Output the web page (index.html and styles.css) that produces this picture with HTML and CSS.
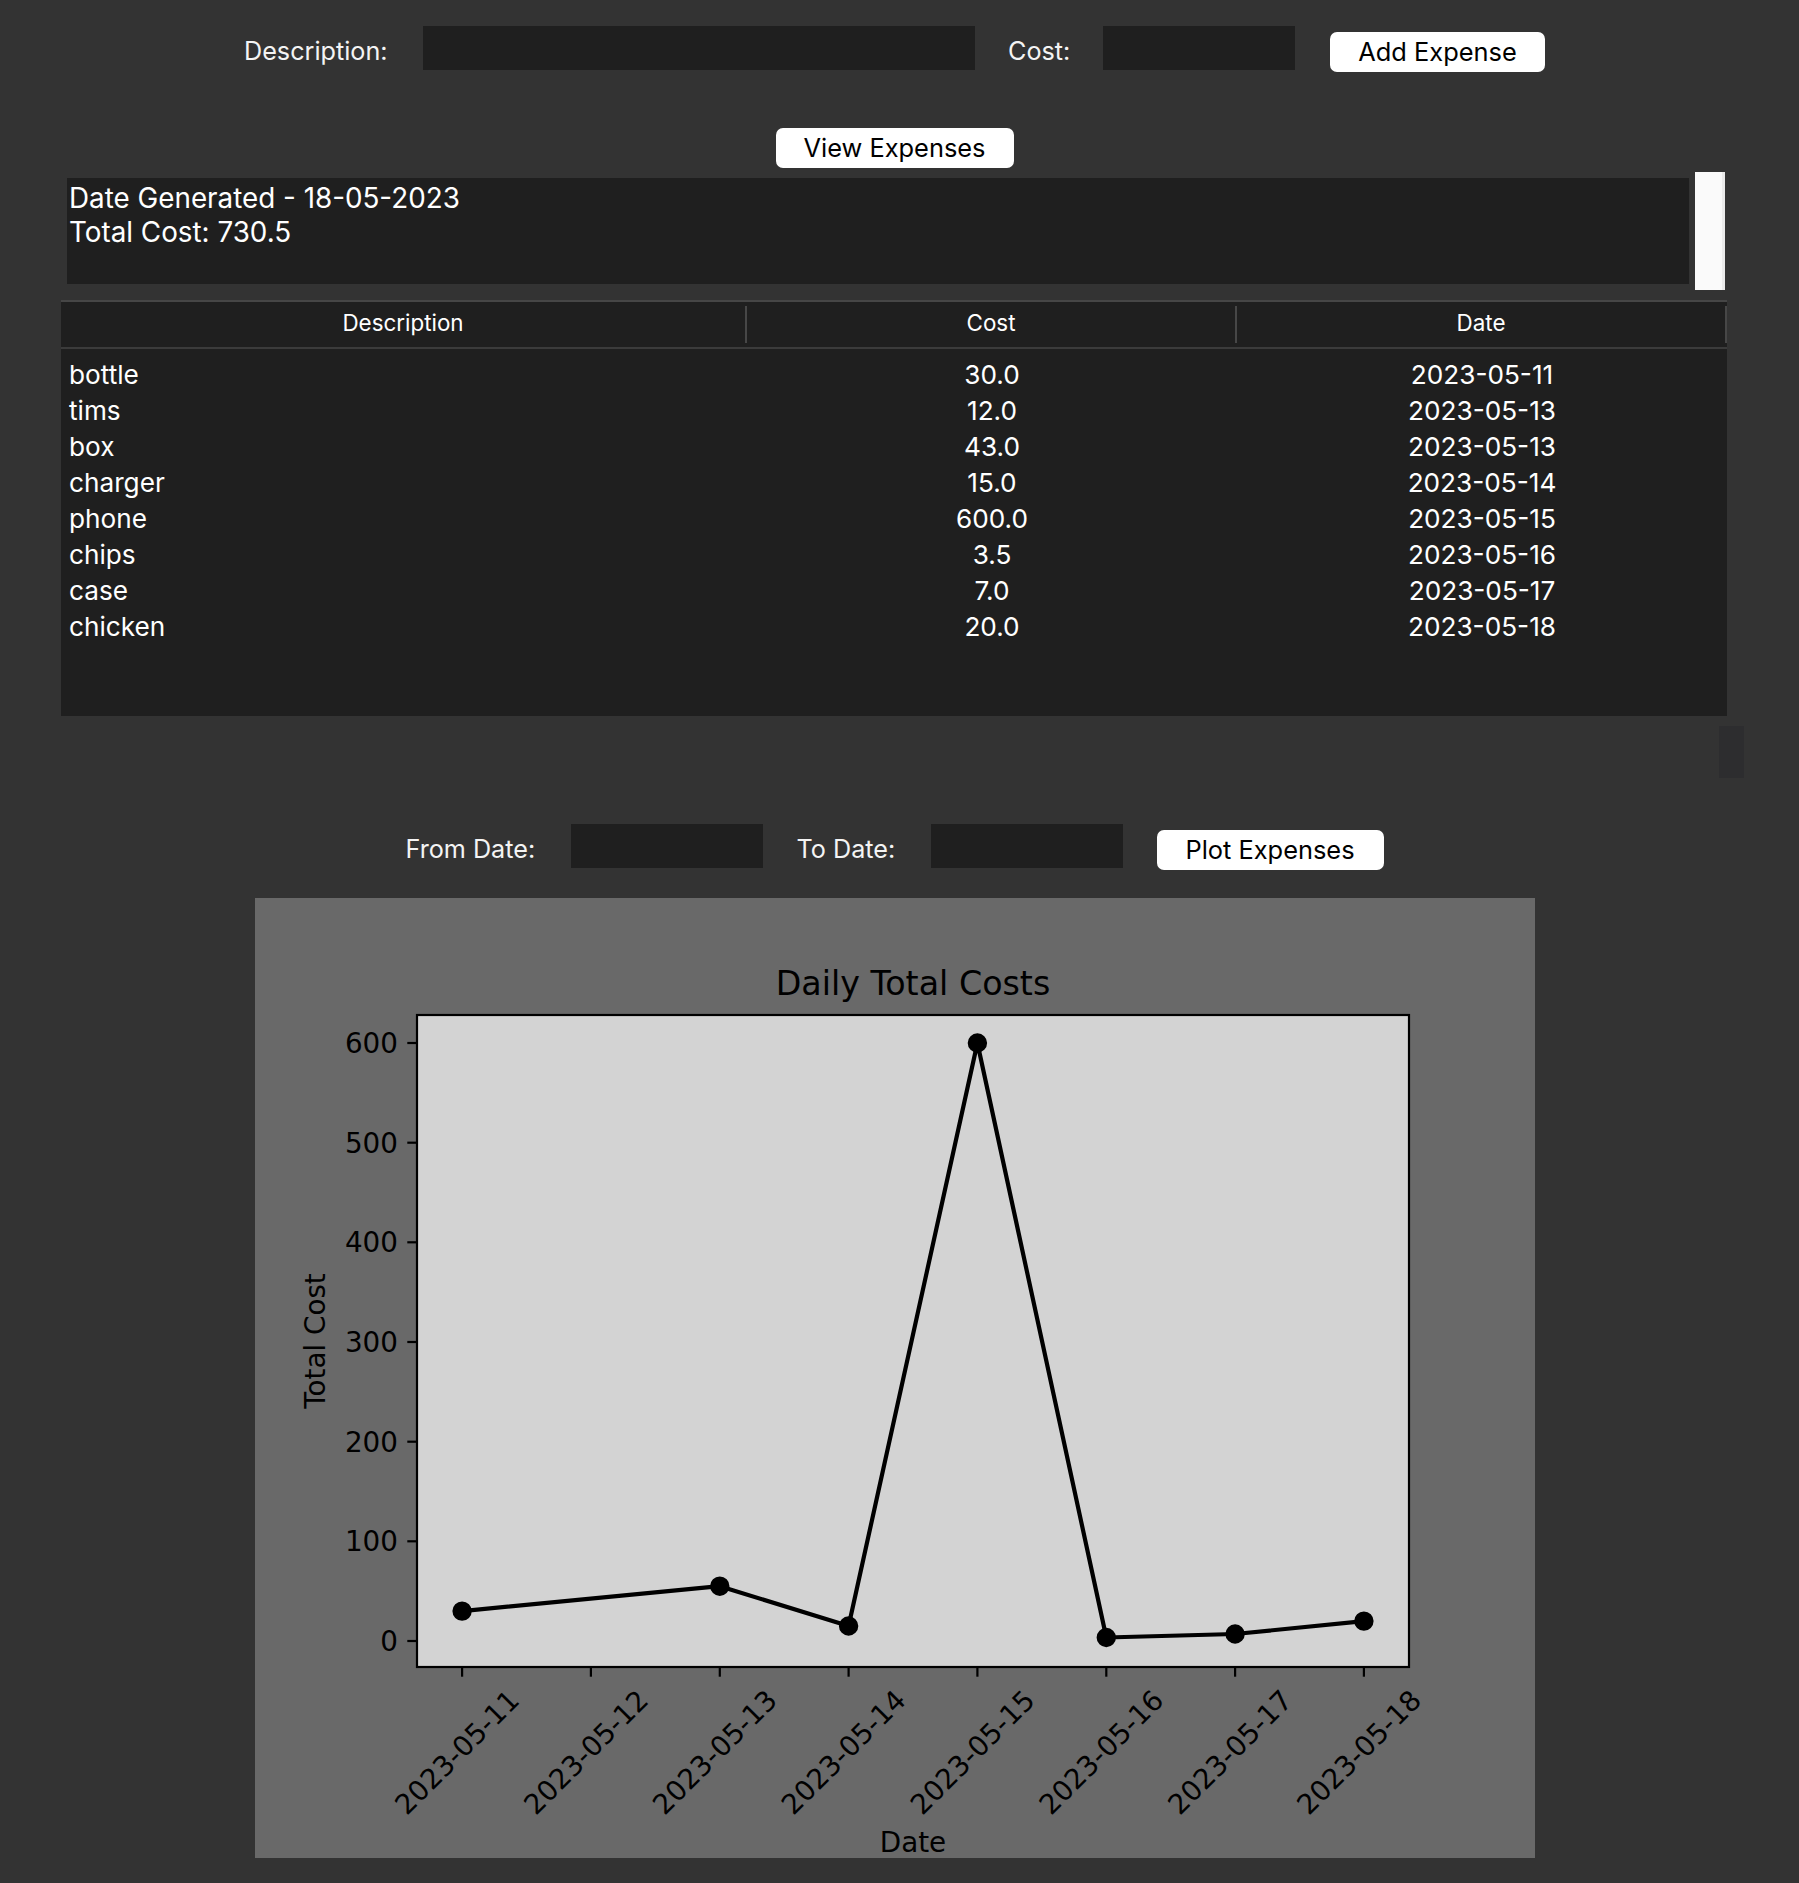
FILE: index.html
```html
<!DOCTYPE html>
<html lang="en">
<head>
<meta charset="utf-8">
<title>Expense Tracker</title>
<link rel="stylesheet" href="styles.css">
</head>
<body>
<div class="app">
  <div class="row row-add">
    <span class="lbl lbl-desc">Description:</span>
    <div class="entry entry-desc"></div>
    <span class="lbl lbl-cost">Cost:</span>
    <div class="entry entry-cost"></div>
    <button class="btn btn-add">Add Expense</button>
  </div>

  <div class="row row-view">
    <button class="btn btn-view">View Expenses</button>
  </div>

  <div class="summary-row">
    <div class="summary">Date Generated - 18-05-2023<br>Total Cost: 730.5</div>
    <div class="vscroll"></div>
  </div>

  <div class="tree">
    <div class="tree-head">
      <div class="th">Description</div>
      <div class="th">Cost</div>
      <div class="th">Date</div>
    </div>
    <div class="tree-body">
      <div class="tr"><span class="td td-desc">bottle</span><span class="td">30.0</span><span class="td">2023-05-11</span></div>
      <div class="tr"><span class="td td-desc">tims</span><span class="td">12.0</span><span class="td">2023-05-13</span></div>
      <div class="tr"><span class="td td-desc">box</span><span class="td">43.0</span><span class="td">2023-05-13</span></div>
      <div class="tr"><span class="td td-desc">charger</span><span class="td">15.0</span><span class="td">2023-05-14</span></div>
      <div class="tr"><span class="td td-desc">phone</span><span class="td">600.0</span><span class="td">2023-05-15</span></div>
      <div class="tr"><span class="td td-desc">chips</span><span class="td">3.5</span><span class="td">2023-05-16</span></div>
      <div class="tr"><span class="td td-desc">case</span><span class="td">7.0</span><span class="td">2023-05-17</span></div>
      <div class="tr"><span class="td td-desc">chicken</span><span class="td">20.0</span><span class="td">2023-05-18</span></div>
    </div>
  </div>
  <div class="hscroll"></div>

  <div class="row row-plot">
    <span class="lbl lbl-from">From Date:</span>
    <div class="entry entry-date"></div>
    <span class="lbl lbl-to">To Date:</span>
    <div class="entry entry-date"></div>
    <button class="btn btn-plot">Plot Expenses</button>
  </div>

  <div class="figure">
    <svg class="chart" width="1280" height="960" viewBox="0 0 1280 960" xmlns="http://www.w3.org/2000/svg">
      <rect x="0" y="0" width="1280" height="960" fill="#696969"/>
      <text class="ct-title" x="658" y="97" text-anchor="middle">Daily Total Costs</text>
      <rect x="162" y="117" width="992" height="652" fill="#d3d3d3"/>

      <polyline points="207.1,713.1 464.8,688.2 593.6,728.0 722.4,145.0 851.3,739.5 980.1,736.0 1108.9,723.1" fill="none" stroke="#000" stroke-width="4.2" stroke-linejoin="round"/>
      <g fill="#000" stroke="#000" stroke-width="2.8">
        <circle cx="207.1" cy="713.1" r="8.3"/>
        <circle cx="464.8" cy="688.2" r="8.3"/>
        <circle cx="593.6" cy="728.0" r="8.3"/>
        <circle cx="722.4" cy="145.0" r="8.3"/>
        <circle cx="851.3" cy="739.5" r="8.3"/>
        <circle cx="980.1" cy="736.0" r="8.3"/>
        <circle cx="1108.9" cy="723.1" r="8.3"/>
      </g>

      <rect x="162" y="117" width="992" height="652" fill="none" stroke="#000" stroke-width="2.2"/>

      <g stroke="#000" stroke-width="2.2">
        <line x1="152.3" y1="743" x2="162" y2="743"/>
        <line x1="152.3" y1="643.3" x2="162" y2="643.3"/>
        <line x1="152.3" y1="543.7" x2="162" y2="543.7"/>
        <line x1="152.3" y1="444" x2="162" y2="444"/>
        <line x1="152.3" y1="344.3" x2="162" y2="344.3"/>
        <line x1="152.3" y1="244.7" x2="162" y2="244.7"/>
        <line x1="152.3" y1="145" x2="162" y2="145"/>

        <line x1="207.1" y1="769" x2="207.1" y2="778.7"/>
        <line x1="335.9" y1="769" x2="335.9" y2="778.7"/>
        <line x1="464.8" y1="769" x2="464.8" y2="778.7"/>
        <line x1="593.6" y1="769" x2="593.6" y2="778.7"/>
        <line x1="722.4" y1="769" x2="722.4" y2="778.7"/>
        <line x1="851.3" y1="769" x2="851.3" y2="778.7"/>
        <line x1="980.1" y1="769" x2="980.1" y2="778.7"/>
        <line x1="1108.9" y1="769" x2="1108.9" y2="778.7"/>
      </g>

      <g class="ct-tick" text-anchor="end">
        <text x="143" y="753">0</text>
        <text x="143" y="653.3">100</text>
        <text x="143" y="553.7">200</text>
        <text x="143" y="454">300</text>
        <text x="143" y="354.3">400</text>
        <text x="143" y="254.7">500</text>
        <text x="143" y="155">600</text>

        <text transform="translate(266.1,804) rotate(-45)">2023-05-11</text>
        <text transform="translate(394.9,804) rotate(-45)">2023-05-12</text>
        <text transform="translate(523.8,804) rotate(-45)">2023-05-13</text>
        <text transform="translate(652.6,804) rotate(-45)">2023-05-14</text>
        <text transform="translate(781.4,804) rotate(-45)">2023-05-15</text>
        <text transform="translate(910.3,804) rotate(-45)">2023-05-16</text>
        <text transform="translate(1039.1,804) rotate(-45)">2023-05-17</text>
        <text transform="translate(1167.9,804) rotate(-45)">2023-05-18</text>
      </g>

      <text class="ct-label" transform="translate(70,443) rotate(-90)" text-anchor="middle">Total Cost</text>
      <text class="ct-label" x="658" y="954" text-anchor="middle">Date</text>
    </svg>
  </div>
</div>
</body>
</html>
```

FILE: styles.css
```css
html, body {
  margin: 0;
  padding: 0;
}

body {
  background: #333333;
  color: #ffffff;
  font-family: "Inter", "Liberation Sans", sans-serif;
}

.app {
  width: 1789px;
  min-height: 1883px;
}

.row {
  display: flex;
  justify-content: center;
  align-items: flex-start;
}

.lbl {
  display: block;
  height: 44px;
  line-height: 50px;
  font-size: 25.2px;
  white-space: nowrap;
  color: #f4f4f4;
}

.entry {
  height: 44px;
  background: #1f1f1f;
}

.btn {
  display: block;
  height: 40px;
  margin: 6px 0 0 0;
  padding: 0;
  border: none;
  border-radius: 7px;
  background: #ffffff;
  color: #000000;
  font-family: "Inter", "Liberation Sans", sans-serif;
  font-size: 25.4px;
  line-height: 40px;
  text-align: center;
}

/* row 1 */
.row-add {
  padding-top: 26px;
  height: 44px;
}

.lbl-desc {
  width: 144px;
  margin-right: 35px;
}

.entry-desc {
  width: 552px;
}

.lbl-cost {
  width: 62px;
  margin: 0 33px;
}

.entry-cost {
  width: 192px;
}

.btn-add {
  width: 215px;
  margin-left: 35px;
}

/* row 2 */
.row-view {
  margin-top: 58px;
  height: 40px;
}

.btn-view {
  width: 238px;
  margin-top: 0;
}

/* summary */
.summary-row {
  display: flex;
  align-items: center;
  gap: 6px;
  margin-top: 4px;
  padding-left: 67px;
  height: 118px;
}

.summary {
  width: 1622px;
  height: 106px;
  box-sizing: border-box;
  padding: 3px 0 0 2px;
  background: #1f1f1f;
  font-size: 27.8px;
  line-height: 34px;
  white-space: nowrap;
}

.vscroll {
  width: 27px;
  height: 118px;
  background: #fafafa;
  border-right: 3px solid #ebebeb;
}

/* tree */
.tree {
  margin: 10px 0 0 61px;
  width: 1666px;
  background: #1f1f1f;
  border-top: 2px solid #464646;
}

.tree-head {
  display: grid;
  grid-template-columns: 686px 490px 490px;
  height: 45px;
  border-bottom: 2px solid #3b3b3b;
}

.th {
  margin: 4px 0;
  padding-bottom: 4px;
  border-right: 2px solid #474747;
  text-align: center;
  font-size: 22.4px;
  line-height: 33px;
}

.tree-body {
  height: 359px;
  padding-top: 8px;
}

.tr {
  display: grid;
  grid-template-columns: 686px 490px 490px;
  height: 36px;
  line-height: 36px;
  font-size: 26.2px;
}

.td {
  text-align: center;
  white-space: nowrap;
}

.td-desc {
  text-align: left;
  padding-left: 8px;
}

.hscroll {
  margin: 10px 0 0 1719px;
  width: 25px;
  height: 52px;
  background: #2d2d2f;
}

/* plot row */
.row-plot {
  margin-top: 46px;
  height: 44px;
}

.lbl-from {
  width: 131px;
  margin-right: 34px;
}

.lbl-to {
  width: 100px;
  margin: 0 34px;
}

.entry-date {
  width: 192px;
}

.btn-plot {
  width: 227px;
  margin-left: 34px;
}

/* figure */
.figure {
  width: 1280px;
  height: 960px;
  margin: 30px auto 0 auto;
}

.chart {
  display: block;
  font-family: "DejaVu Sans", sans-serif;
}

.ct-title {
  font-size: 33.3px;
  fill: #000;
}

.ct-tick {
  font-size: 27.8px;
  fill: #000;
}

.ct-label {
  font-size: 27.8px;
  fill: #000;
}
```
